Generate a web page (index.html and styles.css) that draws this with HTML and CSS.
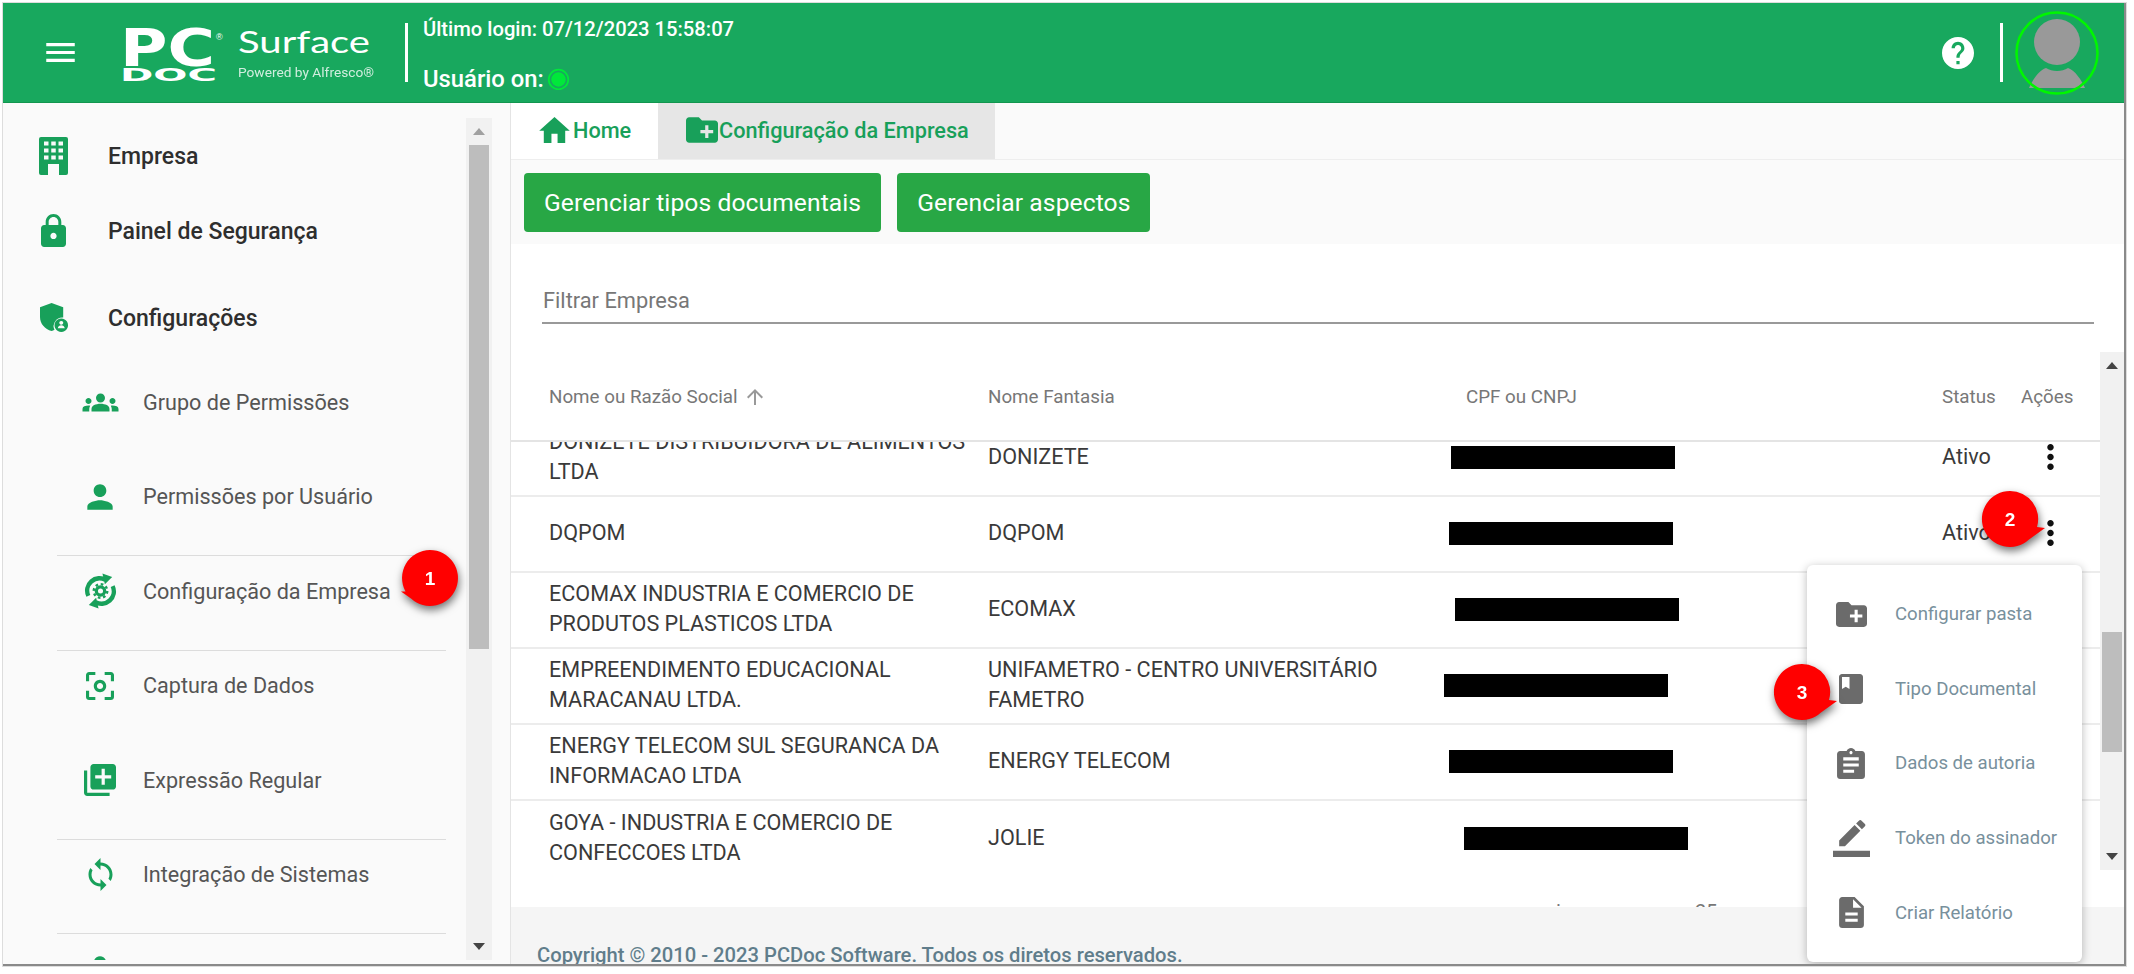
FILE: index.html
```html
<!DOCTYPE html>
<html lang="pt-BR">
<head>
<meta charset="utf-8">
<title>PCDoc Surface</title>
<link rel="stylesheet" href="styles.css">
</head>
<body>
<svg class="sprite" aria-hidden="true">
  <symbol id="i-menu" viewBox="3 6 18 12"><path d="M3 18h18v-2H3v2zm0-5h18v-2H3v2zm0-7v2h18V6H3z"/></symbol>
  <symbol id="i-help" viewBox="2 2 20 20"><path d="M12 2C6.48 2 2 6.48 2 12s4.48 10 10 10 10-4.48 10-10S17.52 2 12 2zm1 17h-2v-2h2v2zm2.07-7.75l-.9.92C13.45 12.9 13 13.5 13 15h-2v-.5c0-1.1.45-2.1 1.17-2.83l1.24-1.26c.37-.36.59-.86.59-1.41 0-1.1-.9-2-2-2s-2 .9-2 2H8c0-2.21 1.79-4 4-4s4 1.79 4 4c0 .88-.36 1.68-.93 2.25z"/></symbol>
  <symbol id="i-building" viewBox="0 0 29 38"><path fill-rule="evenodd" d="M2 0h25a2 2 0 0 1 2 2v34a2 2 0 0 1-2 2h-7V27H9v11H2a2 2 0 0 1-2-2V2a2 2 0 0 1 2-2zM5 4.500v4h4.500v-4zm7.250 0v4h4.500v-4zm7.250 0v4H24v-4zM5 11.500v4h4.500v-4zm7.250 0v4h4.500v-4zm7.250 0v4H24v-4zM5 18.500v4h4.500v-4zm7.250 0v4h4.500v-4zm7.250 0v4H24v-4z"/></symbol>
  <symbol id="i-lock" viewBox="4 1 16 21"><path d="M18 8h-1V6c0-2.760-2.240-5-5-5S7 3.240 7 6v2H6c-1.100 0-2 .9-2 2v10c0 1.100.9 2 2 2h12c1.100 0 2-.9 2-2V10c0-1.100-.9-2-2-2zm-6 9c-1.100 0-2-.9-2-2s.9-2 2-2 2 .9 2 2-.9 2-2 2zm3.100-9H8.900V6c0-1.710 1.390-3.100 3.100-3.100 1.710 0 3.100 1.390 3.100 3.100v2z"/></symbol>
  <symbol id="i-shield" viewBox="0 0 30 30"><path d="M12 0L0 4.500v10C0 21.500 5 27 12 29c1-.3 2-.7 3-1.200A9 9 0 0 1 24 15V4.500z"/><path fill-rule="evenodd" d="M22 16a7 7 0 1 0 .01 0zm0 2.500a2 2 0 1 1-.01 0zm-3.600 7.500c.3-2 1.800-3 3.600-3s3.300 1 3.600 3z"/></symbol>
  <symbol id="i-groups" viewBox="0 5 24 14"><path d="M12 12.750c1.630 0 3.070.39 4.240.9 1.080.48 1.760 1.560 1.760 2.730V18H6v-1.610c0-1.180.68-2.260 1.760-2.730 1.170-.52 2.610-.91 4.240-.91zM4 13c1.100 0 2-.9 2-2s-.9-2-2-2-2 .9-2 2 .9 2 2 2zm1.130 1.100c-.37-.06-.74-.1-1.130-.1-.99 0-1.930.21-2.780.58C.48 14.900 0 15.620 0 16.430V18h4.500v-1.610c0-.83.23-1.610.63-2.290zM20 13c1.100 0 2-.9 2-2s-.9-2-2-2-2 .9-2 2 .9 2 2 2zm4 3.430c0-.81-.48-1.530-1.220-1.850-.85-.37-1.790-.58-2.780-.58-.39 0-.76.04-1.130.1.4.68.63 1.460.63 2.290V18H24v-1.570zM12 6c1.660 0 3 1.340 3 3s-1.340 3-3 3-3-1.340-3-3 1.340-3 3-3z"/></symbol>
  <symbol id="i-person" viewBox="0 0 24 24"><path d="M12 12c2.210 0 4-1.790 4-4s-1.790-4-4-4-4 1.790-4 4 1.790 4 4 4zm0 2c-2.670 0-8 1.340-8 4v2h16v-2c0-2.660-5.330-4-8-4z"/></symbol>
  <symbol id="i-gearsync" viewBox="0 0 36 36">
    <path d="M3.500 24A15 15 0 0 1 25 4.800L22 8.500A10.500 10.500 0 0 0 7.500 22z" />
    <path d="M20 0l10 3.500L22.500 11z"/>
    <path d="M32.500 12A15 15 0 0 1 11 31.200L14 27.500A10.500 10.500 0 0 0 28.500 14z"/>
    <path d="M16 36L6 32.500 13.500 25z"/>
    <circle cx="18" cy="18" r="4.300" fill="none" stroke="currentColor" stroke-width="3.400"/>
    <circle cx="18" cy="18" r="7" fill="none" stroke="currentColor" stroke-width="2.400" stroke-dasharray="2.750 2.750"/>
  </symbol>
  <symbol id="i-focus" viewBox="3 3 18 18"><path d="M5 15H3v4c0 1.100.9 2 2 2h4v-2H5v-4zM5 5h4V3H5c-1.100 0-2 .9-2 2v4h2V5zm14-2h-4v2h4v4h2V5c0-1.100-.9-2-2-2zm0 16h-4v2h4c1.100 0 2-.9 2-2v-4h-2v4zM12 8c-2.210 0-4 1.790-4 4s1.790 4 4 4 4-1.790 4-4-1.790-4-4-4zm0 6c-1.100 0-2-.9-2-2s.9-2 2-2 2 .9 2 2-.9 2-2 2z"/></symbol>
  <symbol id="i-libadd" viewBox="2 2 20 20"><path d="M4 6H2v14c0 1.100.9 2 2 2h14v-2H4V6zm16-4H8c-1.100 0-2 .9-2 2v12c0 1.100.9 2 2 2h12c1.100 0 2-.9 2-2V4c0-1.100-.9-2-2-2zm-1 9h-4v4h-2v-4H9V9h4V5h2v4h4v2z"/></symbol>
  <symbol id="i-sync" viewBox="4 1 16 22"><path d="M12 4V1L8 5l4 4V6c3.310 0 6 2.690 6 6 0 1.010-.25 1.970-.7 2.800l1.460 1.460C19.540 15.030 20 13.570 20 12c0-4.420-3.580-8-8-8zm0 14c-3.310 0-6-2.690-6-6 0-1.010.25-1.970.7-2.800L5.240 7.740C4.460 8.970 4 10.430 4 12c0 4.420 3.580 8 8 8v3l4-4-4-4v3z"/></symbol>
  <symbol id="i-home" viewBox="2 3 20 17"><path d="M10 20v-6h4v6h5v-8h3L12 3 2 12h3v8z"/></symbol>
  <symbol id="i-folder" viewBox="2 4 20 16"><path d="M20 6h-8l-2-2H4c-1.110 0-1.990.89-1.990 2L2 18c0 1.110.89 2 2 2h16c1.110 0 2-.89 2-2V8c0-1.110-.89-2-2-2zm-1 8h-3v3h-2v-3h-3v-2h3V9h2v3h3v2z"/></symbol>
  <symbol id="i-book" viewBox="4 2 16 20"><path d="M18 2H6c-1.100 0-2 .9-2 2v16c0 1.100.9 2 2 2h12c1.100 0 2-.9 2-2V4c0-1.100-.9-2-2-2zM6 4h5v8l-2.500-1.500L6 12V4z"/></symbol>
  <symbol id="i-assign" viewBox="3 1 18 20"><path d="M19 3h-4.180C14.400 1.840 13.300 1 12 1c-1.300 0-2.400.84-2.820 2H5c-1.100 0-2 .9-2 2v14c0 1.100.9 2 2 2h14c1.100 0 2-.9 2-2V5c0-1.100-.9-2-2-2zm-7 0c.55 0 1 .45 1 1s-.45 1-1 1-1-.45-1-1 .45-1 1-1zm2 14H7v-2h7v2zm3-4H7v-2h10v2zm0-4H7V7h10v2z"/></symbol>
  <symbol id="i-pen" viewBox="0 0 24 24"><path d="M17.750 7L14 3.250l-10 10V17h3.750l10-10zm2.960-2.960c.39-.39.39-1.020 0-1.410L18.370.29c-.39-.39-1.020-.39-1.410 0L15 2.250 18.750 6l1.960-1.960z"/><path d="M0 20h24v4H0z"/></symbol>
  <symbol id="i-desc" viewBox="4 2 16 20"><path d="M14 2H6c-1.100 0-1.990.9-1.990 2L4 20c0 1.100.89 2 1.990 2H18c1.100 0 2-.9 2-2V8l-6-6zm2 16H8v-2h8v2zm0-4H8v-2h8v2zm-3-5V3.500L18.500 9H13z"/></symbol>
  <symbol id="i-more" viewBox="10 4 4 16"><path d="M12 8c1.100 0 2-.9 2-2s-.9-2-2-2-2 .9-2 2 .9 2 2 2zm0 2c-1.100 0-2 .9-2 2s.9 2 2 2 2-.9 2-2-.9-2-2-2zm0 6c-1.100 0-2 .9-2 2s.9 2 2 2 2-.9 2-2-.9-2-2-2z"/></symbol>
  <symbol id="i-up" viewBox="4 4 16 16"><path d="M4 12l1.410 1.410L11 7.830V20h2V7.830l5.580 5.590L20 12l-8-8-8 8z"/></symbol>
</svg>

<div class="window">
  <header class="topbar">
    <svg class="ic hamburger"><use href="#i-menu"/></svg>
    <svg class="logo" viewBox="0 0 260 62" aria-label="PC DOC Surface">
      <text class="logo-pc" x="1" y="44.500" textLength="95" lengthAdjust="spacingAndGlyphs">PC</text>
      <text class="logo-reg" x="97" y="19">®</text>
      <text class="logo-doc" x="1" y="59.500" textLength="97" lengthAdjust="spacingAndGlyphs">DOC</text>
      <text class="logo-surface" x="119" y="31.500" textLength="132" lengthAdjust="spacingAndGlyphs">Surface</text>
      <text class="logo-by" x="119" y="55.500" textLength="136" lengthAdjust="spacingAndGlyphs">Powered by Alfresco®</text>
    </svg>
    <div class="vline"></div>
    <div class="session">
      <div>Último login: 07/12/2023 15:58:07</div>
      <div class="online">Usuário on: <span class="dot"></span></div>
    </div>
    <div class="spacer"></div>
    <svg class="ic help"><use href="#i-help"/></svg>
    <div class="vline vline-right"></div>
    <svg class="avatar" viewBox="0 0 84 84">
      <g fill="#999">
        <circle cx="42" cy="31" r="23"/>
        <path d="M14 77C17 70 24 59 31 57C34 59 38 60 42 60S50 59 53 57C60 59 67 70 70 77Z"/>
      </g>
      <circle cx="42" cy="42" r="40.500" fill="none" stroke="#00f700" stroke-width="2.500"/>
    </svg>
  </header>

  <div class="content">
    <aside class="sidebar">
      <nav class="nav">
        <div class="nav-main"><svg class="ic nav-ic ic-building"><use href="#i-building"/></svg><span>Empresa</span></div>
        <div class="nav-main"><svg class="ic nav-ic ic-lock"><use href="#i-lock"/></svg><span>Painel de Segurança</span></div>
        <div class="nav-main nav-config"><svg class="ic nav-ic ic-shield"><use href="#i-shield"/></svg><span>Configurações</span></div>
        <div class="nav-sub"><span class="sub-ic"><svg class="ic ic-groups"><use href="#i-groups"/></svg></span><span>Grupo de Permissões</span></div>
        <div class="nav-sub"><span class="sub-ic"><svg class="ic ic-person"><use href="#i-person"/></svg></span><span>Permissões por Usuário</span></div>
        <div class="nav-sub ruled"><span class="sub-ic"><svg class="ic ic-gear"><use href="#i-gearsync"/></svg></span><span>Configuração da Empresa</span></div>
        <div class="nav-sub ruled"><span class="sub-ic"><svg class="ic ic-focus"><use href="#i-focus"/></svg></span><span>Captura de Dados</span></div>
        <div class="nav-sub"><span class="sub-ic"><svg class="ic ic-lib"><use href="#i-libadd"/></svg></span><span>Expressão Regular</span></div>
        <div class="nav-sub ruled"><span class="sub-ic"><svg class="ic ic-sync"><use href="#i-sync"/></svg></span><span>Integração de Sistemas</span></div>
        <div class="nav-sub ruled"><span class="sub-ic"><svg class="ic ic-person"><use href="#i-person"/></svg></span><span></span></div>
      </nav>
      <div class="scrollbar side-scroll">
        <span class="arrow-up"></span>
        <div class="thumb side-thumb"></div>
        <span class="arrow-down"></span>
      </div>
    </aside>

    <main class="main">
      <div class="tabs">
        <div class="tab tab-home"><svg class="ic tab-ic-home"><use href="#i-home"/></svg>Home</div>
        <div class="tab tab-active"><svg class="ic tab-ic-folder"><use href="#i-folder"/></svg>Configuração da Empresa</div>
      </div>
      <div class="toolbar">
        <div class="btn">Gerenciar tipos documentais</div>
        <div class="btn">Gerenciar aspectos</div>
      </div>
      <div class="filter"><div class="filter-input">Filtrar Empresa</div></div>
      <div class="table-area">
        <div class="table">
          <div class="row head">
            <div class="c-name">Nome ou Razão Social <svg class="ic sort"><use href="#i-up"/></svg></div>
            <div>Nome Fantasia</div>
            <div class="c-cpf-head">CPF ou CNPJ</div>
            <div>Status</div>
            <div>Ações</div>
          </div>
          <div class="tbody">
            <div class="tbody-inner">
              <div class="row">
                <div class="c-name">DONIZETE DISTRIBUIDORA DE ALIMENTOS LTDA</div>
                <div>DONIZETE</div>
                <div><span class="redact r1"></span></div>
                <div>Ativo</div>
                <div><svg class="ic kebab"><use href="#i-more"/></svg></div>
              </div>
              <div class="row">
                <div class="c-name">DQPOM</div>
                <div>DQPOM</div>
                <div><span class="redact r2"></span></div>
                <div>Ativo</div>
                <div><svg class="ic kebab"><use href="#i-more"/></svg></div>
              </div>
              <div class="row">
                <div class="c-name">ECOMAX INDUSTRIA E COMERCIO DE PRODUTOS PLASTICOS LTDA</div>
                <div>ECOMAX</div>
                <div><span class="redact r3"></span></div>
                <div></div><div></div>
              </div>
              <div class="row">
                <div class="c-name">EMPREENDIMENTO EDUCACIONAL MARACANAU LTDA.</div>
                <div class="c-fant">UNIFAMETRO - CENTRO UNIVERSITÁRIO FAMETRO</div>
                <div><span class="redact r4"></span></div>
                <div></div><div></div>
              </div>
              <div class="row">
                <div class="c-name">ENERGY TELECOM SUL SEGURANCA DA INFORMACAO LTDA</div>
                <div>ENERGY TELECOM</div>
                <div><span class="redact r2"></span></div>
                <div></div><div></div>
              </div>
              <div class="row row-last">
                <div class="c-name">GOYA - INDUSTRIA E COMERCIO DE CONFECCOES LTDA</div>
                <div>JOLIE</div>
                <div><span class="redact r6"></span></div>
                <div></div><div></div>
              </div>
            </div>
            <div class="pager"><span>i</span><span>25</span></div>
          </div>
        </div>
        <div class="scrollbar table-scroll">
          <span class="arrow-up"></span>
          <div class="thumb table-thumb"></div>
          <span class="arrow-down"></span>
        </div>
      </div>
      <footer class="footer">Copyright © 2010 - 2023 PCDoc Software. Todos os diretos reservados.</footer>
    </main>
  </div>

  <div class="menu">
    <div class="menu-item"><span class="menu-ic"><svg class="ic m-folder"><use href="#i-folder"/></svg></span>Configurar pasta</div>
    <div class="menu-item"><span class="menu-ic"><svg class="ic m-book"><use href="#i-book"/></svg></span>Tipo Documental</div>
    <div class="menu-item"><span class="menu-ic"><svg class="ic m-assign"><use href="#i-assign"/></svg></span>Dados de autoria</div>
    <div class="menu-item"><span class="menu-ic"><svg class="ic m-pen"><use href="#i-pen"/></svg></span>Token do assinador</div>
    <div class="menu-item"><span class="menu-ic"><svg class="ic m-desc"><use href="#i-desc"/></svg></span>Criar Relatório</div>
  </div>

  <svg class="badge b1" viewBox="0 0 72 66"><path d="M44 2a28 28 0 1 1-19 48.600L15 43.500h4.500A28 28 0 0 1 44 2z"/><text x="44" y="37">1</text></svg>
  <svg class="badge b2" viewBox="0 0 72 66"><path d="M28 2a28 28 0 0 1 27 36l8 1-16 11.500A28 28 0 1 1 28 2z"/><text x="28" y="37">2</text></svg>
  <svg class="badge b3" viewBox="0 0 72 66"><path d="M28 2a28 28 0 0 1 27 36l8 1-16 11.500A28 28 0 1 1 28 2z"/><text x="28" y="37">3</text></svg>
</div>
</body>
</html>
```
FILE: styles.css
```css
* { box-sizing: border-box; }
html, body { margin: 0; padding: 0; background: #fff; }
body { width: 2134px; height: 974px; overflow: hidden; font-family: Roboto, "Liberation Sans", sans-serif; color: #333; }
.sprite { display: none; }
.ic { display: block; fill: currentColor; flex: none; }

.window {
  position: relative;
  width: 2123px;
  height: 963px;
  margin: 3px 0 0 3px;
  display: flex;
  flex-direction: column;
  overflow: hidden;
  box-shadow: 0 0 0 1px #ddd;
  background: #fff;
  border-right: 2px solid #8a8a8a;
  border-bottom: 2px solid #8a8a8a;
}

/* top bar */
.topbar {
  height: 100px;
  flex: none;
  background: #18a85e;
  border-bottom: 1px solid #12964f;
  display: flex;
  align-items: center;
  color: #fff;
}
.hamburger { width: 31px; height: 19px; margin-left: 42px; color: #fff; }
.logo { width: 260px; height: 62px; margin: -2px 0 0 43px; flex: none; fill: #fff; overflow: visible; }
.logo-pc { font: 900 51px "DejaVu Sans", sans-serif; }
.logo-reg { font: 400 9px "Liberation Sans", sans-serif; }
.logo-doc { font: 900 18px "DejaVu Sans", sans-serif; }
.logo-surface { font: 400 31px Lato, "Liberation Sans", sans-serif; }
.logo-by { font: 400 12.500px Roboto, sans-serif; opacity: .8; }
.vline { width: 3px; height: 59px; background: #fff; margin-left: 26px; flex: none; }
.session { margin-left: 15px; height: 100%; display: flex; flex-direction: column; justify-content: space-between; padding: 14px 0 11px; font-size: 20.200px; font-weight: 500; line-height: 24px; }
.online { display: flex; align-items: center; gap: 4px; font-size: 23.800px; }
.dot { width: 21px; height: 21px; border-radius: 50%; background: #00e83a; border: 2px solid #18a85e; box-shadow: 0 0 0 2px #00e83a; transform: scale(.85); }
.spacer { flex: 1; }
.help { width: 32px; height: 32px; color: #fff; }
.vline-right { margin-left: 26px; }
.avatar { width: 84px; height: 84px; margin: 0 25px 0 12px; flex: none; }

/* body */
.content { flex: 1; min-height: 0; display: flex; }
.sidebar { width: 508px; flex: none; display: flex; padding: 15px 18px 4px 0; background: #fafafa; border-right: 1px solid #e4e4e4; }
.nav { flex: 1; min-width: 0; overflow: hidden; }
.nav-main { height: 75px; display: flex; align-items: center; font-size: 23px; font-weight: 500; color: #2e2e2e; }
.nav-main span { padding-top: 2px; }
.nav-config { margin-top: 12px; height: 75px; margin-bottom: 11px; }
.nav-ic { color: #18a05a; }
.ic-building { width: 29px; height: 38px; margin-left: 36px; margin-right: 40px; }
.ic-lock { width: 25px; height: 33px; margin-left: 38px; margin-right: 42px; }
.ic-shield { width: 29px; height: 29px; margin-left: 37px; margin-right: 39px; }
.nav-sub { height: 94.500px; margin-left: 54px; margin-right: 20px; display: flex; align-items: center; padding: 1px 0 24px; font-size: 21.600px; color: #555; border-top: 1px solid transparent; }
.nav-sub.ruled { border-top-color: #dcdcdc; }
.sub-ic { width: 86px; display: flex; justify-content: center; color: #18a05a; flex: none; }
.ic-groups { width: 37px; height: 21px; }
.ic-person { width: 38px; height: 38px; }
.ic-gear { width: 35px; height: 36px; }
.ic-focus { width: 28px; height: 28px; }
.ic-lib { width: 32px; height: 32px; }
.ic-sync { width: 25px; height: 33px; }

.scrollbar { background: #f1f1f1; width: 26px; flex: none; display: flex; flex-direction: column; align-items: center; position: relative; }
.arrow-up { width: 0; height: 0; border: 6px solid transparent; border-top: 0; border-bottom: 7px solid #a0a0a0; margin-top: 10px; }
.arrow-down { width: 0; height: 0; border: 6px solid transparent; border-bottom: 0; border-top: 7px solid #444; margin-top: auto; margin-bottom: 10px; }
.thumb { background: #bdbdbd; width: 20px; }
.side-thumb { margin-top: 10px; height: 504px; }
.table-scroll .arrow-up { border-bottom-color: #444; }
.table-thumb { margin-top: 263px; height: 120px; }

/* main */
.main { flex: 1; min-width: 0; display: flex; flex-direction: column; background: #fff; }
.tabs { height: 57px; flex: none; display: flex; background: #fafafa; border-bottom: 1px solid #eee; }
.tab { display: flex; align-items: center; font-size: 21.700px; font-weight: 500; color: #18a05a; height: 56px; padding-bottom: 2px; }
.tab-home { width: 147px; background: #fff; padding-left: 28px; }
.tab-active { width: 337px; background: #e6e6e6; padding-left: 28px; }
.tab-ic-home { width: 31px; height: 26px; margin-right: 3px; }
.tab-ic-folder { width: 32px; height: 26px; margin-right: 1px; }
.toolbar { height: 84px; flex: none; display: flex; gap: 16px; padding: 13px 13px; background: #fafafa; }
.btn { height: 59px; background: #28a745; color: #fff; border-radius: 4px; font-size: 24.600px; font-weight: 400; padding: 0 20px; display: flex; align-items: center; letter-spacing: .1px; }
.filter { height: 108px; flex: none; padding: 31px 30px 0 31px; }
.filter-input { height: 48px; border-bottom: 2px solid #999; font-size: 21.800px; color: #777; line-height: 50px; padding-left: 1px; margin-top: 1px; }

.table-area { flex: 1; min-height: 0; display: flex; align-items: flex-start; }
.table { flex: 1; min-width: 0; height: 100%; display: flex; flex-direction: column; }
.row { display: grid; grid-template-columns: 439px 452px 502px 79px 1fr; padding: 0 0 1px 38px; align-items: center; height: 76px; border-bottom: 2px solid #ececec; font-size: 21.600px; line-height: 30.500px; color: #3a3a3a; flex: none; }
.row.head { height: 90px; font-size: 18.800px; color: #777; border-bottom: 2px solid #e4e4e4; padding-bottom: 0; }
.head > div { display: flex; align-items: center; padding-top: 2px; }
.c-cpf-head { padding-left: 26px; }
.c-name { padding-right: 10px; }
.c-fant { padding-right: 40px; }
.sort { width: 16px; height: 16px; color: #999; margin-left: 9px; }
.row-last { border-bottom: 0; }
.tbody { flex: 1; min-height: 0; overflow: hidden; position: relative; }
.tbody-inner { margin-top: -21.500px; }
.redact { display: block; width: 224px; height: 23px; background: #000; }
.r1 { margin-left: 11px; }
.r2 { margin-left: 9px; }
.r3 { margin-left: 15px; }
.r4 { margin-left: 4px; }
.r6 { margin-left: 24px; }
.kebab { width: 11px; height: 26px; color: #111; margin-left: 24px; }
.pager { display: flex; gap: 134px; margin-top: 25px; padding-left: 1045px; font-size: 20px; line-height: 20px; color: #777; }
.table-scroll { height: 518px; width: 24px; }
.footer { height: 57px; flex: none; background: #f5f5f5; display: flex; align-items: flex-end; padding: 0 0 0 26px; font-size: 20.200px; font-weight: 500; color: #607d8b; line-height: 17px; }

/* overlays */
.menu {
  position: absolute;
  left: 1804px;
  top: 562px;
  width: 275px;
  height: 397px;
  background: #fff;
  border-radius: 6px;
  box-shadow: 0 2px 10px rgba(0,0,0,.28);
  padding: 12px 0;
  display: flex;
  flex-direction: column;
}
.menu-item { height: 74.600px; display: flex; align-items: center; font-size: 18.600px; color: #78909c; flex: none; }
.menu-ic { width: 88px; display: flex; justify-content: center; color: #6b6b6b; flex: none; }
.m-folder { width: 31px; height: 25px; }
.m-book { width: 24px; height: 30px; }
.m-assign { width: 28px; height: 31px; }
.m-pen { width: 37px; height: 37px; }
.m-desc { width: 25px; height: 31px; }

.badge { position: absolute; width: 72px; height: 66px; fill: #f00; filter: drop-shadow(1px 4px 4px rgba(0,0,0,.55)); overflow: visible; }
.badge text { font: 700 19px "Liberation Sans", sans-serif; fill: #fff; text-anchor: middle; }
.b1 { left: 383px; top: 545px; }
.b2 { left: 1979px; top: 486px; }
.b3 { left: 1771px; top: 659px; }
```
